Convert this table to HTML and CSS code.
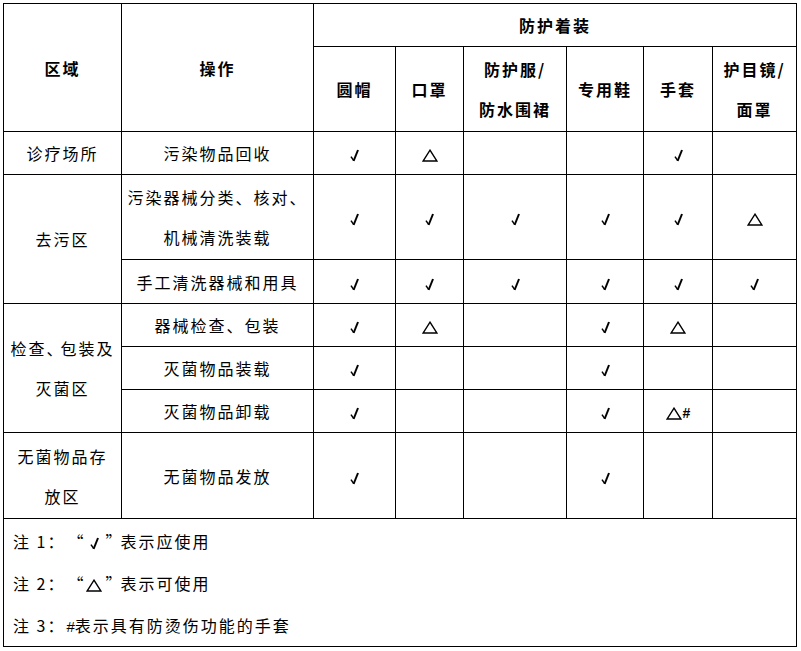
FILE: index.html
```html
<!DOCTYPE html>
<html lang="zh-CN">
<head>
<meta charset="utf-8">
<link rel="stylesheet" href="styles.css">
</head>
<body>
<table class="grid">
  <colgroup>
    <col class="c1"><col class="c2"><col class="c3"><col class="c4"><col class="c5"><col class="c6"><col class="c7"><col class="c8">
  </colgroup>
  <tr class="r1">
    <th rowspan="2">区域</th>
    <th rowspan="2">操作</th>
    <th colspan="6">防护着装</th>
  </tr>
  <tr class="r2">
    <th>圆帽</th>
    <th>口罩</th>
    <th>防护服/<br>防水围裙</th>
    <th>专用鞋</th>
    <th>手套</th>
    <th>护目镜/<br>面罩</th>
  </tr>
  <tr class="r3">
    <td>诊疗场所</td>
    <td>污染物品回收</td>
    <td><svg class="ck" viewBox="0 0 9 13"><path class="s" d="M1 7.6 L3.6 11.4"/><path d="M3.6 12 L8 1"/></svg></td>
    <td><svg class="tri" viewBox="0 0 16 13"><path d="M8 1.2 L14.8 12 L1.2 12 Z"/></svg></td>
    <td></td>
    <td></td>
    <td><svg class="ck" viewBox="0 0 9 13"><path class="s" d="M1 7.6 L3.6 11.4"/><path d="M3.6 12 L8 1"/></svg></td>
    <td></td>
  </tr>
  <tr class="r4">
    <td rowspan="2">去污区</td>
    <td>污染器械分类、核对、<br>机械清洗装载</td>
    <td><svg class="ck" viewBox="0 0 9 13"><path class="s" d="M1 7.6 L3.6 11.4"/><path d="M3.6 12 L8 1"/></svg></td>
    <td><svg class="ck" viewBox="0 0 9 13"><path class="s" d="M1 7.6 L3.6 11.4"/><path d="M3.6 12 L8 1"/></svg></td>
    <td><svg class="ck" viewBox="0 0 9 13"><path class="s" d="M1 7.6 L3.6 11.4"/><path d="M3.6 12 L8 1"/></svg></td>
    <td><svg class="ck" viewBox="0 0 9 13"><path class="s" d="M1 7.6 L3.6 11.4"/><path d="M3.6 12 L8 1"/></svg></td>
    <td><svg class="ck" viewBox="0 0 9 13"><path class="s" d="M1 7.6 L3.6 11.4"/><path d="M3.6 12 L8 1"/></svg></td>
    <td><svg class="tri" viewBox="0 0 16 13"><path d="M8 1.2 L14.8 12 L1.2 12 Z"/></svg></td>
  </tr>
  <tr class="r5">
    <td>手工清洗器械和用具</td>
    <td><svg class="ck" viewBox="0 0 9 13"><path class="s" d="M1 7.6 L3.6 11.4"/><path d="M3.6 12 L8 1"/></svg></td>
    <td><svg class="ck" viewBox="0 0 9 13"><path class="s" d="M1 7.6 L3.6 11.4"/><path d="M3.6 12 L8 1"/></svg></td>
    <td><svg class="ck" viewBox="0 0 9 13"><path class="s" d="M1 7.6 L3.6 11.4"/><path d="M3.6 12 L8 1"/></svg></td>
    <td><svg class="ck" viewBox="0 0 9 13"><path class="s" d="M1 7.6 L3.6 11.4"/><path d="M3.6 12 L8 1"/></svg></td>
    <td><svg class="ck" viewBox="0 0 9 13"><path class="s" d="M1 7.6 L3.6 11.4"/><path d="M3.6 12 L8 1"/></svg></td>
    <td><svg class="ck" viewBox="0 0 9 13"><path class="s" d="M1 7.6 L3.6 11.4"/><path d="M3.6 12 L8 1"/></svg></td>
  </tr>
  <tr class="r6">
    <td rowspan="3">检查<span class="tight">、</span>包装及<br>灭菌区</td>
    <td>器械检查、包装</td>
    <td><svg class="ck" viewBox="0 0 9 13"><path class="s" d="M1 7.6 L3.6 11.4"/><path d="M3.6 12 L8 1"/></svg></td>
    <td><svg class="tri" viewBox="0 0 16 13"><path d="M8 1.2 L14.8 12 L1.2 12 Z"/></svg></td>
    <td></td>
    <td><svg class="ck" viewBox="0 0 9 13"><path class="s" d="M1 7.6 L3.6 11.4"/><path d="M3.6 12 L8 1"/></svg></td>
    <td><svg class="tri" viewBox="0 0 16 13"><path d="M8 1.2 L14.8 12 L1.2 12 Z"/></svg></td>
    <td></td>
  </tr>
  <tr class="r7">
    <td>灭菌物品装载</td>
    <td><svg class="ck" viewBox="0 0 9 13"><path class="s" d="M1 7.6 L3.6 11.4"/><path d="M3.6 12 L8 1"/></svg></td>
    <td></td>
    <td></td>
    <td><svg class="ck" viewBox="0 0 9 13"><path class="s" d="M1 7.6 L3.6 11.4"/><path d="M3.6 12 L8 1"/></svg></td>
    <td></td>
    <td></td>
  </tr>
  <tr class="r8">
    <td>灭菌物品卸载</td>
    <td><svg class="ck" viewBox="0 0 9 13"><path class="s" d="M1 7.6 L3.6 11.4"/><path d="M3.6 12 L8 1"/></svg></td>
    <td></td>
    <td></td>
    <td><svg class="ck" viewBox="0 0 9 13"><path class="s" d="M1 7.6 L3.6 11.4"/><path d="M3.6 12 L8 1"/></svg></td>
    <td><svg class="tri" viewBox="0 0 16 13"><path d="M8 1.2 L14.8 12 L1.2 12 Z"/></svg><span class="hash">#</span></td>
    <td></td>
  </tr>
  <tr class="r9">
    <td>无菌物品存<br>放区</td>
    <td>无菌物品发放</td>
    <td><svg class="ck" viewBox="0 0 9 13"><path class="s" d="M1 7.6 L3.6 11.4"/><path d="M3.6 12 L8 1"/></svg></td>
    <td></td>
    <td></td>
    <td><svg class="ck" viewBox="0 0 9 13"><path class="s" d="M1 7.6 L3.6 11.4"/><path d="M3.6 12 L8 1"/></svg></td>
    <td></td>
    <td></td>
  </tr>
  <tr class="r10">
    <td colspan="8" class="notes">
      <div class="note">注 1：<span class="qo">“</span><span class="qm"><svg class="ck" viewBox="0 0 9 13"><path class="s" d="M1 7.6 L3.6 11.4"/><path d="M3.6 12 L8 1"/></svg></span><span class="qc">”</span>表示应使用</div>
      <div class="note">注 2：<span class="qo">“</span><span class="qm"><svg class="tri" viewBox="0 0 16 13"><path d="M8 1.2 L14.8 12 L1.2 12 Z"/></svg></span><span class="qc">”</span>表示可使用</div>
      <div class="note">注 3：<span class="hashn">#</span>表示具有防烫伤功能的手套</div>
    </td>
  </tr>
</table>
</body>
</html>
```

FILE: styles.css
```css
html, body {
  margin: 0;
  padding: 0;
  background: #ffffff;
}

body {
  padding: 3px 0 0 3px;
  font-family: "Noto Sans CJK SC", "Noto Sans", sans-serif;
  color: #000000;
}

.grid {
  border-collapse: collapse;
  table-layout: fixed;
  width: 794px;
}

.c1 { width: 118px; }
.c2 { width: 192px; }
.c3 { width: 82px; }
.c4 { width: 68px; }
.c5 { width: 103px; }
.c6 { width: 77px; }
.c7 { width: 69px; }
.c8 { width: 84px; }

.grid th,
.grid td {
  border: 1px solid #000000;
  padding: 0;
  text-align: center;
  vertical-align: middle;
  font-size: 16px;
  line-height: 40px;
  letter-spacing: 2px;
  font-weight: normal;
}

.grid th {
  font-weight: bold;
}

.r1 { height: 43px; }
.r2 { height: 85px; }
.r3 { height: 43px; }
.r4 { height: 85px; }
.r5 { height: 44px; }
.r6 { height: 43px; }
.r7 { height: 43px; }
.r8 { height: 43px; }
.r9 { height: 86px; }
.r10 { height: 128px; }

.ck {
  width: 9px;
  height: 13px;
  vertical-align: middle;
  fill: none;
  stroke: #000000;
  stroke-width: 2;
}

.ck .s {
  stroke-width: 1.5;
}

.tri {
  width: 16px;
  height: 13px;
  vertical-align: middle;
  fill: none;
  stroke: #000000;
  stroke-width: 1.4;
}

.hash {
  font-family: "Liberation Sans", sans-serif;
  font-weight: bold;
  font-size: 14px;
  line-height: 1;
  letter-spacing: 0;
  margin-left: 1px;
}

.tight {
  letter-spacing: -4px;
  margin-right: 2px;
}

.grid td.notes {
  text-align: left;
  vertical-align: top;
  padding-left: 9px;
}

.note {
  height: 42px;
  line-height: 42px;
  white-space: nowrap;
}

.note:first-child {
  margin-top: 1px;
}

.qo,
.qm,
.qc {
  display: inline-block;
  line-height: 1;
  letter-spacing: 0;
}

.qo {
  width: 18px;
  text-align: right;
}

.qm {
  width: 22px;
  text-align: center;
}

.qc {
  width: 15px;
  text-align: left;
}

.hashn {
  font-family: "Liberation Sans", sans-serif;
  font-size: 15px;
  letter-spacing: 0;
  margin-left: 1px;
}
```
